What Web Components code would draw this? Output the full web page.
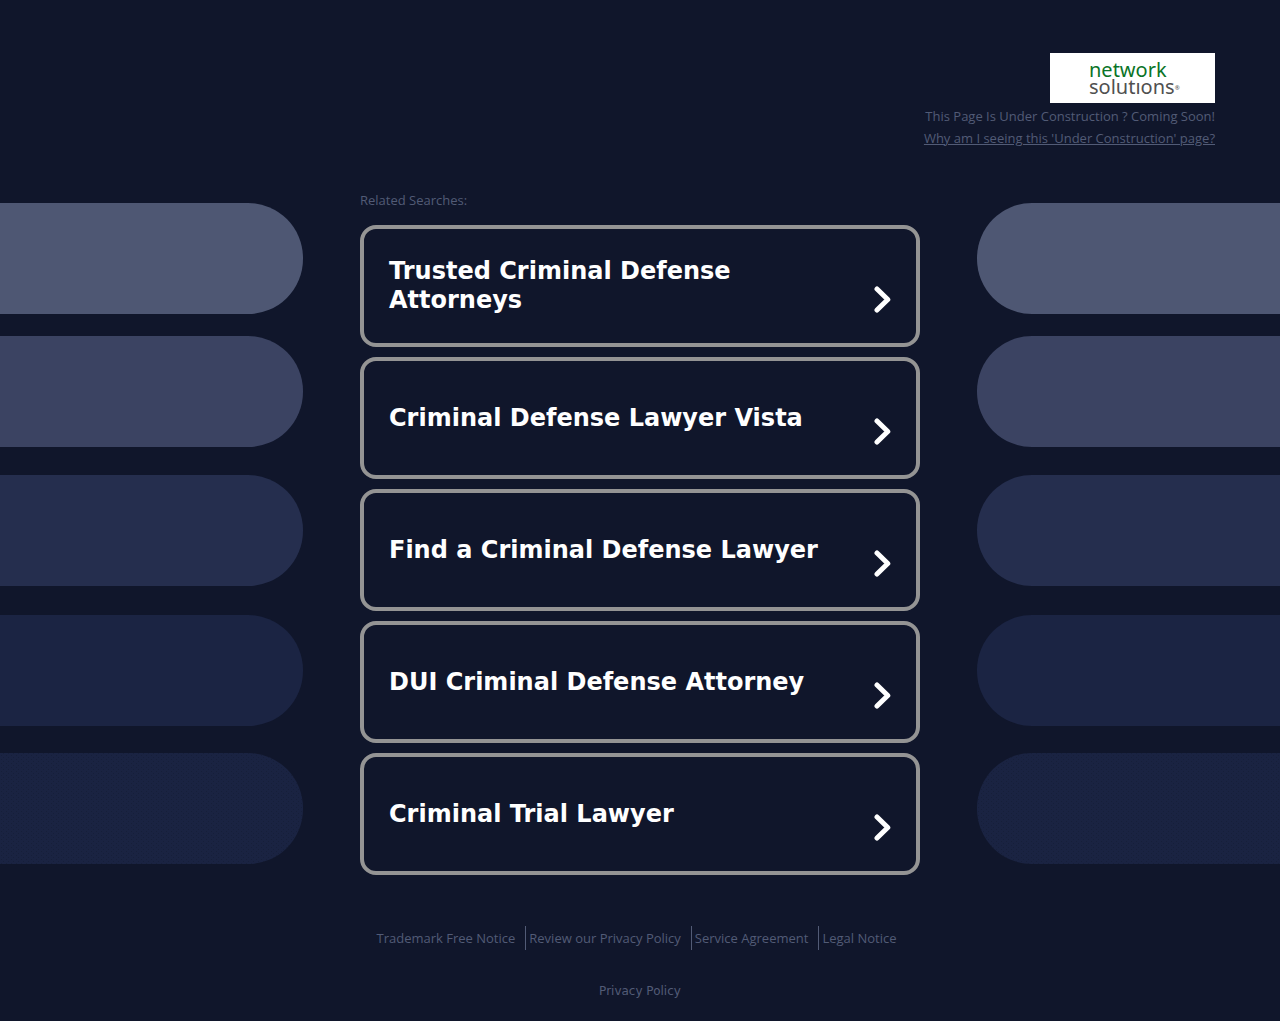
<!DOCTYPE html>
<html lang="en">
<head>
  <meta charset="utf-8">
  <meta name="viewport" content="width=device-width, initial-scale=1">
  <title>Under Construction</title>
  <style>
    body {
      margin: 0;
      min-height: 100vh;
      background: #10162b;
      color: #525b76;
      font-family: "Open Sans", sans-serif;
      font-size: 13px;
      font-weight: 500;
      overflow-x: hidden;
    }
  </style>
</head>
<body>
  <parking-page>
    <page-header slot="header">
      <network-logo slot="logo"></network-logo>
      <span>This Page Is Under Construction ? Coming Soon!</span>
      <a slot="why" href="#why">Why am I seeing this 'Under Construction' page?</a>
    </page-header>

    <related-searches label="Related Searches:">
      <search-card href="#trusted">Trusted Criminal Defense Attorneys</search-card>
      <search-card href="#vista">Criminal Defense Lawyer Vista</search-card>
      <search-card href="#find">Find a Criminal Defense Lawyer</search-card>
      <search-card href="#dui">DUI Criminal Defense Attorney</search-card>
      <search-card href="#trial">Criminal Trial Lawyer</search-card>
    </related-searches>

    <page-footer slot="footer">
      <a href="#trademark">Trademark Free Notice</a>
      <a href="#review">Review our Privacy Policy</a>
      <a href="#service">Service Agreement</a>
      <a href="#legal">Legal Notice</a>
      <a slot="privacy" href="#privacy">Privacy Policy</a>
    </page-footer>
  </parking-page>

  <script>
    class ParkingPage extends HTMLElement {
      constructor() {
        super();
        this.attachShadow({ mode: 'open' });
        this.shadowRoot.innerHTML = `
          <style>
            :host {
              display: block;
            }

            #columns {
              display: grid;
              grid-template-columns: minmax(0, 1fr) minmax(0, 560px) minmax(0, 1fr);
              column-gap: 57px;
              padding-top: 40px;
            }

            side-pills {
              margin-top: 14px;
            }
          </style>

          <slot name="header"></slot>
          <div id="columns">
            <side-pills></side-pills>
            <main><slot></slot></main>
            <side-pills flipped></side-pills>
          </div>
          <slot name="footer"></slot>
        `;
      }
    }

    // rounded bars that fade out towards the bottom, on both sides of the list
    class SidePills extends HTMLElement {
      constructor() {
        super();
        this.attachShadow({ mode: 'open' });
        this.shadowRoot.innerHTML = `
          <style>
            :host {
              display: block;
            }

            :host([flipped]) svg {
              transform: scaleX(-1);
            }

            svg {
              display: block;
              width: 100%;
            }

            rect.pill {
              x: -60px;
              width: calc(100% + 60px);
              height: 111px;
              rx: 55px;
            }
          </style>

          <svg height="661" aria-hidden="true">
            <defs>
              <pattern id="grain" width="5" height="4" patternUnits="userSpaceOnUse">
                <rect width="5" height="4" fill="#1a2342"/>
                <path d="M1 0h1v1h-1zM3 2h1v1h-1z" fill="#161f39"/>
              </pattern>
            </defs>
            <rect class="pill" y="0" fill="#4e5773"/>
            <rect class="pill" y="133" fill="#3b4362"/>
            <rect class="pill" y="272" fill="#252e4e"/>
            <rect class="pill" y="412" fill="#1b2443"/>
            <rect class="pill" y="550" fill="url(#grain)"/>
          </svg>
        `;
      }
    }

    class PageHeader extends HTMLElement {
      constructor() {
        super();
        this.attachShadow({ mode: 'open' });
        this.shadowRoot.innerHTML = `
          <style>
            header {
              display: flex;
              flex-direction: column;
              align-items: flex-end;
              padding: 53px 65px 0;
              line-height: 22px;
            }

            #notice {
              margin-top: 2px;
            }

            ::slotted(a) {
              color: inherit;
            }
          </style>

          <header>
            <slot name="logo"></slot>
            <div id="notice"><slot></slot></div>
            <slot name="why"></slot>
          </header>
        `;
      }
    }

    class NetworkLogo extends HTMLElement {
      constructor() {
        super();
        this.attachShadow({ mode: 'open' });
        this.shadowRoot.innerHTML = `
          <style>
            :host {
              display: block;
            }

            #logo {
              box-sizing: border-box;
              width: 165px;
              height: 50px;
              padding: 8px 0 0 39px;
              background: #fff;
              color: #505050;
              font: 400 20px/17px "Noto Sans", sans-serif;
            }

            .network {
              color: #0a7427;
            }

            sup {
              font-size: 6px;
              line-height: 6px;
              vertical-align: 4px;
            }
          </style>

          <div id="logo"><span class="network">network</span><br>solutıons<sup>®</sup></div>
        `;
      }
    }

    class RelatedSearches extends HTMLElement {
      constructor() {
        super();
        this.attachShadow({ mode: 'open' });
        this.shadowRoot.innerHTML = `
          <style>
            :host {
              display: block;
            }

            h2 {
              margin: 0 0 14px;
              font: inherit;
              line-height: 22px;
            }

            #list {
              display: flex;
              flex-direction: column;
              gap: 10px;
            }
          </style>

          <h2></h2>
          <div id="list"><slot></slot></div>
        `;
        this.shadowRoot.querySelector('h2').textContent = this.getAttribute('label');
      }
    }

    class SearchCard extends HTMLElement {
      constructor() {
        super();
        this.attachShadow({ mode: 'open' });
        this.shadowRoot.innerHTML = `
          <style>
            :host {
              display: block;
            }

            a {
              box-sizing: border-box;
              display: flex;
              align-items: center;
              justify-content: space-between;
              gap: 32px;
              min-height: 122px;
              padding: 24px 25px;
              border: 4px solid #949494;
              border-radius: 16px;
              color: #fff;
              font: 700 24px/29px "DejaVu Sans", sans-serif;
              text-decoration: none;
            }

            a:hover {
              border-color: #fff;
            }

            svg {
              flex: none;
              align-self: flex-end;
              margin-bottom: 6px;
            }
          </style>

          <a>
            <span><slot></slot></span>
            <svg width="17" height="27" viewBox="0 0 17 27" fill="none" stroke="#fff" stroke-width="5" stroke-linecap="round" stroke-linejoin="round" aria-hidden="true">
              <path d="M3 3l10.800 10.500L3 24"/>
            </svg>
          </a>
        `;
        this.shadowRoot.querySelector('a').href = this.getAttribute('href');
      }
    }

    class PageFooter extends HTMLElement {
      constructor() {
        super();
        this.attachShadow({ mode: 'open' });
        this.shadowRoot.innerHTML = `
          <style>
            footer {
              padding-top: 51px;
            }

            nav {
              display: flex;
              justify-content: center;
              line-height: 24px;
            }

            ::slotted(a) {
              color: inherit;
              text-decoration: none;
            }

            nav ::slotted(a) {
              padding: 0 10px 0 3px;
              border-left: 1px solid #525b76;
            }

            nav ::slotted(a:first-child) {
              border-left: none;
            }

            #privacy {
              margin-top: 30px;
              text-align: center;
              font: 400 12px/22px "DejaVu Sans", sans-serif;
            }
          </style>

          <footer>
            <nav><slot></slot></nav>
            <div id="privacy"><slot name="privacy"></slot></div>
          </footer>
        `;
      }
    }

    customElements.define('side-pills', SidePills);
    customElements.define('network-logo', NetworkLogo);
    customElements.define('page-header', PageHeader);
    customElements.define('search-card', SearchCard);
    customElements.define('related-searches', RelatedSearches);
    customElements.define('page-footer', PageFooter);
    customElements.define('parking-page', ParkingPage);
  </script>
</body>
</html>
